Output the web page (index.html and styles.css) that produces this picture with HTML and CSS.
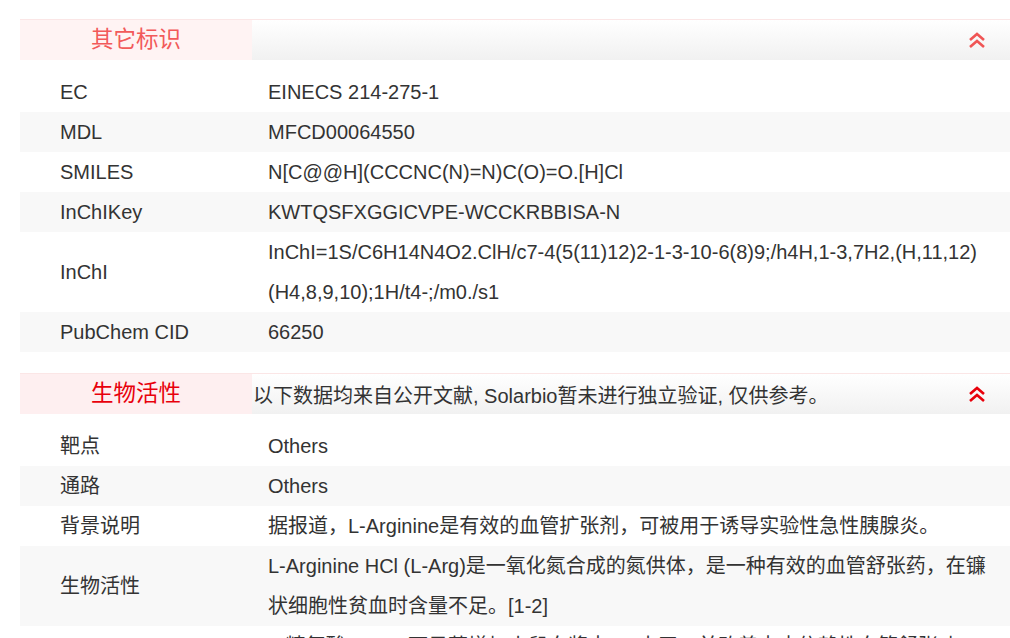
FILE: index.html
```html
<!DOCTYPE html>
<html lang="zh-CN">
<head>
    <meta charset="UTF-8">
    <meta name="viewport" content="width=device-width, initial-scale=1.0">
    <title>L-Arginine HCl</title>
    <link rel="stylesheet" href="styles.css">
</head>
<body>
    <div class="page">
        <div class="section">
            <div class="section-head">
                <div class="section-title light">其它标识</div>
                <div class="section-note"></div>
                <svg class="toggle light" width="18" height="17" viewBox="0 0 18 17">
                    <polyline points="2,8 9,2 16,8" />
                    <polyline points="2,15 9,9 16,15" />
                </svg>
            </div>
            <div class="rows">
                <div class="row">
                    <div class="label">EC</div>
                    <div class="value">EINECS 214-275-1</div>
                </div>
                <div class="row">
                    <div class="label">MDL</div>
                    <div class="value">MFCD00064550</div>
                </div>
                <div class="row">
                    <div class="label">SMILES</div>
                    <div class="value">N[C@@H](CCCNC(N)=N)C(O)=O.[H]Cl</div>
                </div>
                <div class="row">
                    <div class="label">InChIKey</div>
                    <div class="value">KWTQSFXGGICVPE-WCCKRBBISA-N</div>
                </div>
                <div class="row">
                    <div class="label">InChI</div>
                    <div class="value">InChI=1S/C6H14N4O2.ClH/c7-4(5(11)12)2-1-3-10-6(8)9;/h4H,1-3,7H2,(H,11,12)<wbr>(H4,8,9,10);1H/t4-;/m0./s1</div>
                </div>
                <div class="row">
                    <div class="label">PubChem CID</div>
                    <div class="value">66250</div>
                </div>
            </div>
        </div>

        <div class="section">
            <div class="section-head">
                <div class="section-title">生物活性</div>
                <div class="section-note">以下数据均来自公开文献, Solarbio暂未进行独立验证, 仅供参考。</div>
                <svg class="toggle" width="18" height="17" viewBox="0 0 18 17">
                    <polyline points="2,8 9,2 16,8" />
                    <polyline points="2,15 9,9 16,15" />
                </svg>
            </div>
            <div class="rows">
                <div class="row">
                    <div class="label">靶点</div>
                    <div class="value">Others</div>
                </div>
                <div class="row">
                    <div class="label">通路</div>
                    <div class="value">Others</div>
                </div>
                <div class="row">
                    <div class="label">背景说明</div>
                    <div class="value">据报道，L-Arginine是有效的血管扩张剂，可被用于诱导实验性急性胰腺炎。</div>
                </div>
                <div class="row">
                    <div class="label">生物活性</div>
                    <div class="value">L-Arginine HCl (L-Arg)是一氧化氮合成的氮供体，是一种有效的血管舒张药，在镰状细胞性贫血时含量不足。[1-2]</div>
                </div>
                <div class="row">
                    <div class="label">体内研究</div>
                    <div class="value">L-精氨酸(L-Arg)可显著增加小鼠血浆中NO水平，并改善内皮依赖性血管舒张功能。</div>
                </div>
            </div>
        </div>
    </div>
</body>
</html>
```

FILE: styles.css
```css
body {
    margin: 0;
    font-family: "Liberation Sans", Arial, "Noto Sans CJK SC", sans-serif;
    color: #333;
    background-color: white;
}

.page {
    width: 990px;
    padding: 19px 0 0 20px;
}

.section {
    margin-bottom: 21px;
}

.section-head {
    display: flex;
    align-items: center;
    height: 40px;
    border-top: 1px solid #fbe6e6;
    background: linear-gradient(#ffffff, #f1f1f1);
}

.section-title {
    width: 232px;
    height: 40px;
    line-height: 40px;
    text-align: center;
    font-size: 22.5px;
    color: #e8000b;
    background-color: #feeff0;
}

.section-title.light {
    color: #f25a5a;
    background-color: #fff3f3;
}

.section-note {
    flex: 1;
    font-size: 20px;
    color: #333;
    padding-left: 1px;
}

.toggle {
    margin-right: 24px;
    fill: none;
    stroke: #e8000b;
    stroke-width: 2.6;
}

.toggle.light {
    stroke: #f05555;
}

.rows {
    padding-top: 12px;
}

.row {
    display: grid;
    grid-template-columns: 248px 1fr;
    align-items: center;
    font-size: 20px;
    line-height: 40px;
}

.row:nth-child(even) {
    background-color: #f8f8f8;
}

.label {
    padding-left: 40px;
}

.value {
    padding-right: 20px;
    overflow-wrap: anywhere;
}
```
